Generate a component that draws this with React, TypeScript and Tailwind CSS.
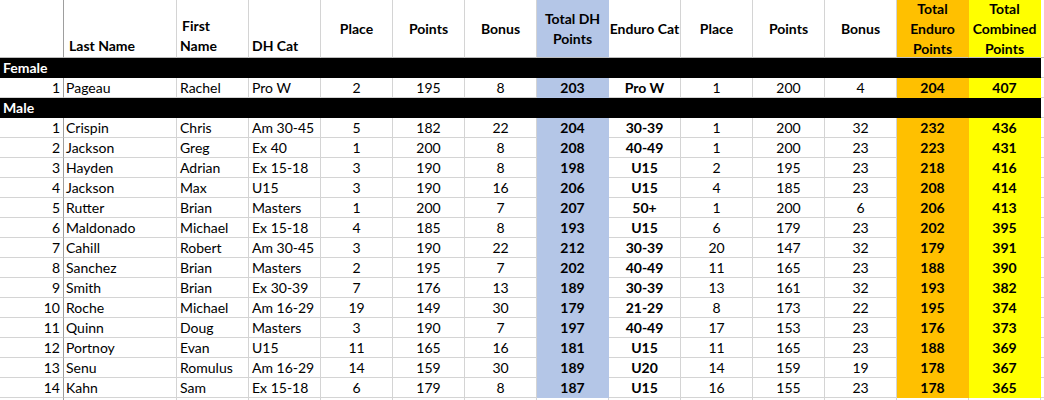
import React from "react";

type Row = [number, string, string, string, number, number, number, number, string, number, number, number, number, number];

const female: Row[] = [[1, "Pageau", "Rachel", "Pro W", 2, 195, 8, 203, "Pro W", 1, 200, 4, 204, 407]];

const male: Row[] = [
  [1, "Crispin", "Chris", "Am 30-45", 5, 182, 22, 204, "30-39", 1, 200, 32, 232, 436],
  [2, "Jackson", "Greg", "Ex 40", 1, 200, 8, 208, "40-49", 1, 200, 23, 223, 431],
  [3, "Hayden", "Adrian", "Ex 15-18", 3, 190, 8, 198, "U15", 2, 195, 23, 218, 416],
  [4, "Jackson", "Max", "U15", 3, 190, 16, 206, "U15", 4, 185, 23, 208, 414],
  [5, "Rutter", "Brian", "Masters", 1, 200, 7, 207, "50+", 1, 200, 6, 206, 413],
  [6, "Maldonado", "Michael", "Ex 15-18", 4, 185, 8, 193, "U15", 6, 179, 23, 202, 395],
  [7, "Cahill", "Robert", "Am 30-45", 3, 190, 22, 212, "30-39", 20, 147, 32, 179, 391],
  [8, "Sanchez", "Brian", "Masters", 2, 195, 7, 202, "40-49", 11, 165, 23, 188, 390],
  [9, "Smith", "Brian", "Ex 30-39", 7, 176, 13, 189, "30-39", 13, 161, 32, 193, 382],
  [10, "Roche", "Michael", "Am 16-29", 19, 149, 30, 179, "21-29", 8, 173, 22, 195, 374],
  [11, "Quinn", "Doug", "Masters", 3, 190, 7, 197, "40-49", 17, 153, 23, 176, 373],
  [12, "Portnoy", "Evan", "U15", 11, 165, 16, 181, "U15", 11, 165, 23, 188, 369],
  [13, "Senu", "Romulus", "Am 16-29", 14, 159, 30, 189, "U20", 14, 159, 19, 178, 367],
  [14, "Kahn", "Sam", "Ex 15-18", 6, 179, 8, 187, "U15", 16, 155, 23, 178, 365],
];

const cell = "h-[20px] border-r border-b border-[#d4d4d4] flex items-center whitespace-nowrap overflow-visible leading-none";
const center = `${cell} justify-center`;
const blue = "h-[20px] border-r border-b border-[#b4c6e7] bg-[#b4c6e7] flex items-center justify-center font-bold leading-none";
const orange = "h-[20px] border-r border-b border-[#ffc000] bg-[#ffc000] flex items-center justify-center font-bold leading-none";
const yellow = "h-[20px] border-r border-b border-[#ffff00] bg-[#ffff00] flex items-center justify-center font-bold leading-none";

function DataRow({ r }: { r: Row }) {
  return (
    <>
      <div className={`h-[20px] border-r border-b border-r-[#9e9e9e] border-b-[#d4d4d4] flex items-center justify-end pr-[3px] leading-none`}>{r[0]}</div>
      <div className={`${cell} pl-[2px]`}>{r[1]}</div>
      <div className={`${cell} pl-[3px]`}>{r[2]}</div>
      <div className={`${cell} pl-[3px]`}>{r[3]}</div>
      <div className={center}>{r[4]}</div>
      <div className={center}>{r[5]}</div>
      <div className={center}>{r[6]}</div>
      <div className={blue}>{r[7]}</div>
      <div className={`${center} font-bold`}>{r[8]}</div>
      <div className={center}>{r[9]}</div>
      <div className={center}>{r[10]}</div>
      <div className={center}>{r[11]}</div>
      <div className={orange}>{r[12]}</div>
      <div className={yellow}>{r[13]}</div>
      <div className="h-[20px] border-b border-[#d4d4d4]"></div>
    </>
  );
}

function Band({ label }: { label: string }) {
  return (
    <>
      <div className="col-span-14 h-[20px] bg-black text-white font-bold flex items-center pl-[3px] leading-none">{label}</div>
      <div className="h-[20px] border-b border-[#d4d4d4]"></div>
    </>
  );
}

export default function App() {
  const hcell = "h-[58px] border-r border-b border-[#d4d4d4] border-b-[#bdbdbd] font-bold leading-[20px]";
  return (
    <div className="w-[1044px] h-[400px] overflow-hidden bg-white text-black text-[14px]" style={{ fontFamily: "Lato, 'Liberation Sans', sans-serif" }}>
      <div className="grid grid-cols-[64px_113px_72px_72px_72px_72px_72px_72px_72px_72px_72px_72px_72px_72px_3px]">
        {/* header */}
        <div className="h-[58px] border-r border-b border-r-[#9e9e9e] border-b-[#bdbdbd]"></div>
        <div className={`${hcell} flex items-end pl-[5px] pb-[1px]`}>Last Name</div>
        <div className={`${hcell} flex flex-col justify-end pl-[3px] pb-[1px]`}>
          <span className="pl-[2px]">First</span>
          <span>Name</span>
        </div>
        <div className={`${hcell} flex items-end pl-[3px] pb-[1px]`}>DH Cat</div>
        <div className={`${hcell} flex items-center justify-center`}>Place</div>
        <div className={`${hcell} flex items-center justify-center`}>Points</div>
        <div className={`${hcell} flex items-center justify-center`}>Bonus</div>
        <div className="h-[58px] border-r border-b border-[#b4c6e7] border-b-[#bdbdbd] bg-[#b4c6e7] font-bold leading-[20px] flex items-center justify-center text-center">
          Total DH<br />Points
        </div>
        <div className={`${hcell} flex items-center justify-center`}>Enduro Cat</div>
        <div className={`${hcell} flex items-center justify-center`}>Place</div>
        <div className={`${hcell} flex items-center justify-center`}>Points</div>
        <div className={`${hcell} flex items-center justify-center`}>Bonus</div>
        <div className="h-[58px] border-r border-b border-[#ffc000] border-b-[#bdbdbd] bg-[#ffc000] font-bold leading-[20px] flex items-center justify-center text-center">
          Total<br />Enduro<br />Points
        </div>
        <div className="h-[58px] border-r border-b border-[#ffff00] border-b-[#bdbdbd] bg-[#ffff00] font-bold leading-[20px] flex items-center justify-center text-center">
          Total<br />Combined<br />Points
        </div>
        <div className="h-[58px] border-b border-[#bdbdbd]"></div>

        <Band label="Female" />
        {female.map((r) => (
          <DataRow key={"f" + r[0]} r={r} />
        ))}
        <Band label="Male" />
        {male.map((r) => (
          <DataRow key={"m" + r[0]} r={r} />
        ))}
        {Array.from({ length: 15 }).map((_, i) => (
          <div key={"e" + i} className={i === 0 ? "h-[20px] border-r border-r-[#9e9e9e]" : i === 14 ? "h-[20px]" : "h-[20px] border-r border-[#d4d4d4]"}></div>
        ))}
      </div>
    </div>
  );
}
